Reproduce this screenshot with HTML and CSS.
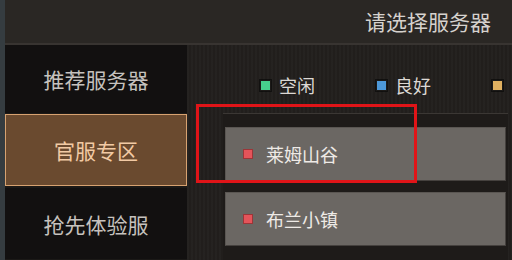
FILE: index.html
```html
<!DOCTYPE html>
<html lang="zh-CN">
<head>
<meta charset="utf-8">
<link rel="stylesheet" href="styles.css">
</head>
<body>
<div class="app">
  <header class="topbar"><span class="title">请选择服务器</span></header>
  <nav class="tabs">
    <div class="tab">推荐服务器</div>
    <div class="tab active">官服专区</div>
    <div class="tab">抢先体验服</div>
  </nav>
  <main class="panel">
    <div class="legend">
      <div class="legend-item"><span class="dot green"></span><span>空闲</span></div>
      <div class="legend-item"><span class="dot blue"></span><span>良好</span></div>
      <div class="legend-item"><span class="dot orange"></span></div>
    </div>
    <div class="list">
      <div class="server"><span class="sq"></span><span class="name">莱姆山谷</span></div>
      <div class="server"><span class="sq"></span><span class="name">布兰小镇</span></div>
    </div>
  </main>
</div>
<div class="highlight"></div>
</body>
</html>
```

FILE: styles.css
```css
html, body {
  margin: 0;
  padding: 0;
}
body {
  width: 512px;
  height: 260px;
  overflow: hidden;
  background: #353c40;
  font-family: "Noto Sans CJK SC", "Noto Sans", sans-serif;
  position: relative;
}
.app {
  margin-left: 5px;
  height: 260px;
  display: grid;
  grid-template-columns: 182px 1fr;
  grid-template-rows: 45px 1fr;
  background: #1a1816;
}
.topbar {
  grid-column: 1 / 3;
  background: #2a2724;
  border-bottom: 2px solid #383431;
  box-sizing: border-box;
  display: flex;
  align-items: center;
  justify-content: flex-end;
  padding-right: 21px;
}
.title {
  color: #d6d2ce;
  font-size: 21px;
  line-height: 24px;
  padding-bottom: 1px;
}
.tabs {
  display: flex;
  flex-direction: column;
  background: #1b1917;
}
.tab {
  height: 68px;
  margin-bottom: 1px;
  background: #121010;
  color: #c6c2be;
  font-size: 21px;
  display: flex;
  align-items: center;
  justify-content: center;
  box-sizing: border-box;
}
.tab.active {
  height: 72px;
  margin-bottom: 2px;
  background: #6a4a2f;
  border: 1px solid #d7a271;
  color: #f2caa4;
}
.tab:last-child {
  flex: 1;
}
.panel {
  background-color: #221f1d;
  background-image: repeating-linear-gradient(90deg, rgba(255,255,255,0.015) 0 2px, rgba(0,0,0,0.04) 2px 4px);
  overflow: hidden;
  display: flex;
  flex-direction: column;
}
.legend {
  height: 68px;
  display: flex;
  align-items: center;
  padding-left: 73px;
  padding-top: 12px;
  box-sizing: border-box;
  white-space: nowrap;
}
.legend-item {
  flex: 0 0 116px;
  display: flex;
  align-items: center;
  gap: 8px;
  color: #dcd8d4;
  font-size: 18px;
  line-height: 22px;
}
.dot {
  width: 9px;
  height: 9px;
  border: 1px solid #1c1a18;
  outline: 1px solid rgba(0,0,0,0.5);
}
.green { background: #46d08c; }
.blue { background: #4d98d8; }
.orange { background: #e0b060; }
.list {
  margin-left: 36px;
  margin-right: 4px;
  flex: 1;
  border-top: 1px solid #3b3734;
  background: #1e1b19;
  padding: 13px 0 0 2px;
}
.server {
  width: 281px;
  height: 54px;
  margin-bottom: 11px;
  box-sizing: border-box;
  background: #6b6763;
  border: 1px solid #5a5652;
  border-right-color: #45413e;
  border-bottom-color: #45413e;
  display: flex;
  align-items: center;
  padding-left: 17px;
  gap: 13px;
}
.sq {
  width: 8px;
  height: 8px;
  background: #e4545a;
  border: 1px solid #9c3538;
}
.name {
  color: #eeeae6;
  font-size: 18px;
  line-height: 22px;
}
.highlight {
  position: absolute;
  left: 196px;
  top: 104px;
  width: 221px;
  height: 79px;
  box-sizing: border-box;
  border: 3px solid #e01418;
}
```
